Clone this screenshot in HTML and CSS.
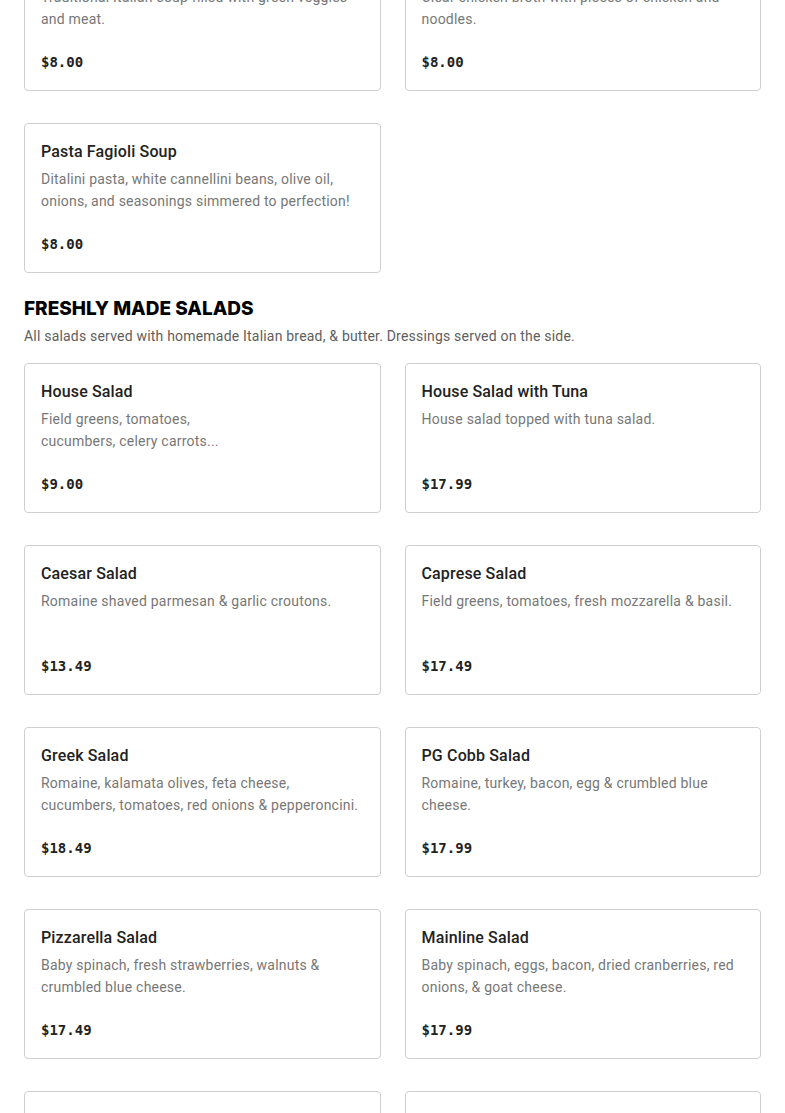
FILE: index.html
```html
<!DOCTYPE html>
<html lang="en">
<head>
<meta charset="utf-8">
<title>Menu</title>
<link rel="stylesheet" href="styles.css">
</head>
<body>
<main class="menu">
  <section class="section section-soups">
    <div class="grid">
      <article class="card">
        <h3 class="card-title">Italian Wedding Soup</h3>
        <p class="card-desc">Traditional Italian soup filled with green veggies and meat.</p>
        <p class="card-price">$8.00</p>
      </article>
      <article class="card">
        <h3 class="card-title">Chicken Noodle Soup</h3>
        <p class="card-desc">Clear chicken broth with pieces of chicken and noodles.</p>
        <p class="card-price">$8.00</p>
      </article>
      <article class="card">
        <h3 class="card-title">Pasta Fagioli Soup</h3>
        <p class="card-desc">Ditalini pasta, white cannellini beans, olive oil, onions, and seasonings simmered to perfection!</p>
        <p class="card-price">$8.00</p>
      </article>
    </div>
  </section>

  <section class="section">
    <h2 class="section-title">FRESHLY MADE SALADS</h2>
    <p class="section-sub">All salads served with homemade Italian bread, &amp; butter. Dressings served on the side.</p>
    <div class="grid">
      <article class="card">
        <h3 class="card-title">House Salad</h3>
        <p class="card-desc">Field greens, tomatoes,<br>cucumbers, celery carrots...</p>
        <p class="card-price">$9.00</p>
      </article>
      <article class="card">
        <h3 class="card-title">House Salad with Tuna</h3>
        <p class="card-desc">House salad topped with tuna salad.</p>
        <p class="card-price">$17.99</p>
      </article>
      <article class="card">
        <h3 class="card-title">Caesar Salad</h3>
        <p class="card-desc">Romaine shaved parmesan &amp; garlic croutons.</p>
        <p class="card-price">$13.49</p>
      </article>
      <article class="card">
        <h3 class="card-title">Caprese Salad</h3>
        <p class="card-desc">Field greens, tomatoes, fresh mozzarella &amp; basil.</p>
        <p class="card-price">$17.49</p>
      </article>
      <article class="card">
        <h3 class="card-title">Greek Salad</h3>
        <p class="card-desc">Romaine, kalamata olives, feta cheese, cucumbers, tomatoes, red onions &amp; pepperoncini.</p>
        <p class="card-price">$18.49</p>
      </article>
      <article class="card">
        <h3 class="card-title">PG Cobb Salad</h3>
        <p class="card-desc">Romaine, turkey, bacon, egg &amp; crumbled blue cheese.</p>
        <p class="card-price">$17.99</p>
      </article>
      <article class="card">
        <h3 class="card-title">Pizzarella Salad</h3>
        <p class="card-desc">Baby spinach, fresh strawberries, walnuts &amp; crumbled blue cheese.</p>
        <p class="card-price">$17.49</p>
      </article>
      <article class="card">
        <h3 class="card-title">Mainline Salad</h3>
        <p class="card-desc">Baby spinach, eggs, bacon, dried cranberries, red onions, &amp; goat cheese.</p>
        <p class="card-price">$17.99</p>
      </article>
      <article class="card">
        <h3 class="card-title">Chef Salad</h3>
        <p class="card-desc">Field greens, ham, turkey, cheese &amp; egg.</p>
        <p class="card-price">$17.99</p>
      </article>
      <article class="card">
        <h3 class="card-title">Antipasto Salad</h3>
        <p class="card-desc">Field greens, salami, ham, provolone &amp; olives.</p>
        <p class="card-price">$18.49</p>
      </article>
    </div>
  </section>
</main>
</body>
</html>
```

FILE: styles.css
```css
html, body {
  margin: 0;
  padding: 0;
  background: #fff;
}

body {
  font-family: "Roboto", "Liberation Sans", sans-serif;
  color: #222;
  overflow: hidden;
}

.menu {
  padding: 0 24px;
  margin-top: -59px;
}

.grid {
  display: grid;
  grid-template-columns: 1fr 1fr;
  column-gap: 24px;
  row-gap: 32px;
}

.card {
  border: 1px solid #cfcfcf;
  border-radius: 4px;
  padding: 16px;
  display: flex;
  flex-direction: column;
  box-sizing: border-box;
  height: 150px;
}

.card-title {
  margin: 0;
  font-size: 16px;
  line-height: 24px;
  font-weight: 500;
  letter-spacing: 0.15px;
  color: #222;
}

.card-desc {
  margin: 4px 0 0 0;
  font-size: 14px;
  line-height: 22px;
  letter-spacing: 0.22px;
  color: #777;
  min-height: 44px;
}

.card-price {
  margin: auto 0 0 0;
  font-family: "DejaVu Sans Mono", "Liberation Mono", monospace;
  font-weight: bold;
  font-size: 14px;
  line-height: 24px;
  color: #222;
}

.section-title {
  margin: 25px 0 0 0;
  font-family: "Inter", "Liberation Sans", sans-serif;
  font-weight: 800;
  font-size: 19px;
  line-height: 22px;
  color: #000;
}

.section-sub {
  margin: 5px 0 16px 0;
  font-size: 14px;
  line-height: 22px;
  letter-spacing: 0.2px;
  color: #5e5e5e;
}
```
